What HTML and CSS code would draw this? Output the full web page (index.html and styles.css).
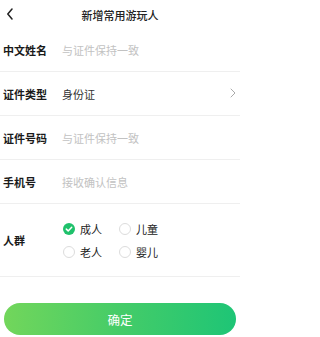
FILE: index.html
```html
<!DOCTYPE html>
<html lang="zh">
<head>
<meta charset="utf-8">
<link rel="stylesheet" href="styles.css">
</head>
<body>
<div class="page">
  <header class="nav">
    <svg class="back" width="8" height="12" viewBox="0 0 8 12"><path d="M6 1 L1.8 6 L6 11" fill="none" stroke="#222" stroke-width="1.5" stroke-linecap="round" stroke-linejoin="round"/></svg>
    <div class="title">新增常用游玩人</div>
  </header>
  <div class="row">
    <div class="label">中文姓名</div>
    <div class="value placeholder">与证件保持一致</div>
  </div>
  <div class="row">
    <div class="label">证件类型</div>
    <div class="value">身份证</div>
    <svg class="chev" width="6" height="10" viewBox="0 0 6 10"><path d="M1 1 L5 5 L1 9" fill="none" stroke="#aaa" stroke-width="1" stroke-linecap="round" stroke-linejoin="round"/></svg>
  </div>
  <div class="row">
    <div class="label">证件号码</div>
    <div class="value placeholder">与证件保持一致</div>
  </div>
  <div class="row">
    <div class="label">手机号</div>
    <div class="value placeholder">接收确认信息</div>
  </div>
  <div class="row group">
    <div class="label">人群</div>
    <div class="radios">
      <div class="opt"><span class="dot on"><svg width="12" height="12" viewBox="0 0 12 12"><path d="M3.3 6.1 L5.2 7.9 L8.7 4.3" fill="none" stroke="#fff" stroke-width="1.5" stroke-linecap="round" stroke-linejoin="round"/></svg></span>成人</div>
      <div class="opt"><span class="dot"></span>儿童</div>
      <div class="opt"><span class="dot"></span>老人</div>
      <div class="opt"><span class="dot"></span>婴儿</div>
    </div>
  </div>
  <div class="btnwrap">
    <div class="btn">确定</div>
  </div>
</div>
</body>
</html>
```
FILE: styles.css
```css
html, body {
  margin: 0;
  padding: 0;
  background: #fff;
}
body {
  font-family: "Noto Sans CJK SC", "Noto Sans", sans-serif;
  color: #222;
  width: 240px;
  height: 337px;
  overflow: hidden;
}
.nav {
  position: relative;
  height: 28px;
  display: flex;
  align-items: center;
  justify-content: center;
}
.back {
  position: absolute;
  left: 6px;
  top: 8px;
}
.title {
  font-size: 11px;
  font-weight: 500;
  color: #222;
  line-height: 14px;
  margin-top: 1px;
}
.row {
  height: 43px;
  border-bottom: 1px solid #efefef;
  display: flex;
  align-items: center;
  padding-left: 3px;
  padding-right: 4px;
}
.label {
  width: 59px;
  flex: none;
  font-size: 11px;
  font-weight: 700;
  color: #1a1a1a;
  line-height: 14px;
}
.value {
  flex: 1;
  font-size: 11px;
  color: #333;
  line-height: 14px;
}
.placeholder {
  color: #c2c2c2;
}
.chev {
  flex: none;
  margin-top: -2px;
}
.row.group {
  height: 72px;
}
.radios {
  display: grid;
  grid-template-columns: 56px 56px;
  grid-auto-rows: 22.5px;
  margin-top: 1px;
  margin-left: 1px;
}
.opt {
  display: flex;
  align-items: center;
  font-size: 11px;
  color: #222;
  line-height: 14px;
}
.dot {
  width: 12px;
  height: 12px;
  box-sizing: border-box;
  border: 1px solid #dcdcdc;
  border-radius: 50%;
  margin-right: 5px;
  display: flex;
  align-items: center;
  justify-content: center;
}
.dot.on {
  border: none;
  background: #1fc16b;
}
.btnwrap {
  padding: 26px 4px 0;
}
.btn {
  height: 32px;
  border-radius: 16px;
  background: linear-gradient(90deg, #72d65b 0%, #45cc68 50%, #1ec576 100%);
  color: #fff;
  font-size: 12.5px;
  display: flex;
  align-items: center;
  justify-content: center;
}
```
